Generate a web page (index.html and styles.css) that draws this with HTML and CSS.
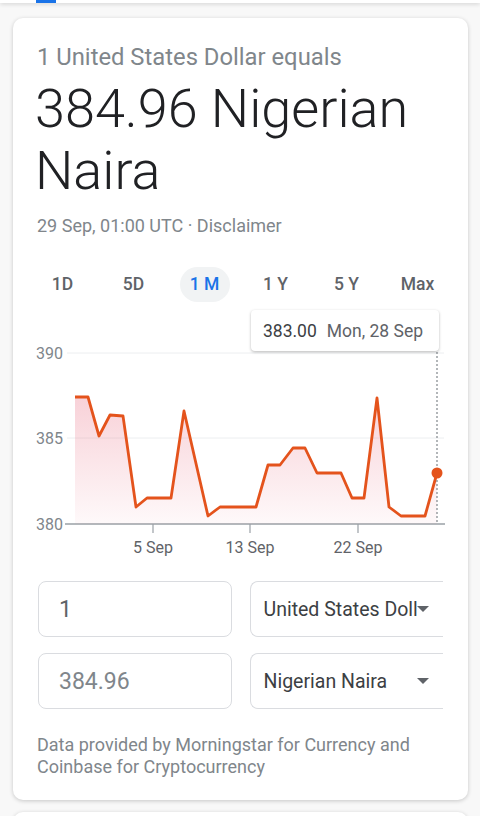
FILE: index.html
```html
<!DOCTYPE html>
<html>
<head>
<meta charset="UTF-8">
<title>USD to NGN</title>
<link rel="stylesheet" href="styles.css">
</head>
<body>

	<div class="topbar">
		<div class="topbar-mark"></div>
	</div>

	<div class="card">
		<div class="equals">1 United States Dollar equals</div>
		<div class="result">384.96 Nigerian Naira</div>
		<div class="stamp">29 Sep, 01:00 UTC · Disclaimer</div>

		<div class="tabs">
			<div class="tab">1D</div>
			<div class="tab">5D</div>
			<div class="tab"><span class="pill">1 M</span></div>
			<div class="tab">1 Y</div>
			<div class="tab">5 Y</div>
			<div class="tab">Max</div>
		</div>

		<div class="chart">
			<svg width="431" height="258" viewBox="0 0 431 258">
				<defs>
					<linearGradient id="fade" x1="0" y1="0" x2="0" y2="1">
						<stop offset="0" stop-color="#e8677d" stop-opacity="0.3"/>
						<stop offset="1" stop-color="#e8677d" stop-opacity="0.04"/>
					</linearGradient>
				</defs>
				<!-- grid -->
				<line x1="40" y1="51" x2="417" y2="51" stroke="#eceef0" stroke-width="1"/>
				<line x1="40" y1="136" x2="417" y2="136" stroke="#eceef0" stroke-width="1"/>
				<line x1="38" y1="222" x2="418" y2="222" stroke="#9aa0a6" stroke-width="1.4"/>
				<line x1="126" y1="222" x2="126" y2="231" stroke="#9aa0a6" stroke-width="1.2"/>
				<line x1="223" y1="222" x2="223" y2="231" stroke="#9aa0a6" stroke-width="1.2"/>
				<line x1="331" y1="222" x2="331" y2="231" stroke="#9aa0a6" stroke-width="1.2"/>
				<g class="ylab">
					<text x="36" y="57" text-anchor="end">390</text>
					<text x="36" y="142" text-anchor="end">385</text>
					<text x="36" y="228" text-anchor="end">380</text>
				</g>
				<g class="xlab">
					<text x="126" y="251" text-anchor="middle">5 Sep</text>
					<text x="223" y="251" text-anchor="middle">13 Sep</text>
					<text x="331" y="251" text-anchor="middle">22 Sep</text>
				</g>
				<!-- area + line -->
				<polygon fill="url(#fade)" points="48,222 48,95 61,95 72,134 83,113 96,114 109,205 120,196 144,196 157,109 181,214 193,205 229,205 241,163 253,163 266,146 278,146 290,171 314,171 325,196 337,196 350,96 362,205 374,214 398,214 410,171 410,222"/>
				<polyline fill="none" stroke="#e4531c" stroke-width="2.8" stroke-linejoin="round" points="48,95 61,95 72,134 83,113 96,114 109,205 120,196 144,196 157,109 181,214 193,205 229,205 241,163 253,163 266,146 278,146 290,171 314,171 325,196 337,196 350,96 362,205 374,214 398,214 410,171"/>
				<line x1="410" y1="50" x2="410" y2="222" stroke="#80868b" stroke-width="1.2" stroke-dasharray="2 2"/>
				<circle cx="410" cy="171" r="5.5" fill="#e4531c"/>
			</svg>
			<div class="tip"><b>383.00</b>Mon, 28 Sep</div>
		</div>

		<div class="convert">
			<div class="field">1</div>
			<div class="field sel">
				<span class="sel-text">United States Dollar</span>
				<span class="caret"></span>
			</div>
			<div class="field light">384.96</div>
			<div class="field sel">
				<span class="sel-text">Nigerian Naira</span>
				<span class="caret"></span>
			</div>
		</div>

		<div class="source">Data provided by Morningstar for Currency and Coinbase for Cryptocurrency</div>
	</div>

	<div class="card next"></div>

</body>
</html>
```

FILE: styles.css
```css
body{
	margin:0;
	background:#f8f8f8;
	font-family:Roboto,"Noto Sans",sans-serif;
	overflow:hidden;
}

.topbar{
	height:3px;
	background:#fff;
	box-shadow:0 1px 4px rgba(0,0,0,.18);
}
.topbar-mark{
	width:20px;
	height:3px;
	margin-left:36px;
	background:#1a73e8;
}

.card{
	width:455px;
	margin:15px 0 0 13px;
	background:#fff;
	border-radius:10px;
	box-shadow:0 1px 4px rgba(0,0,0,.2);
	padding:25px 0 22px;
	box-sizing:border-box;
}
.card.next{
	margin-top:12px;
	height:40px;
	padding:0;
}

.equals{
	padding-left:24px;
	font-size:23.8px;
	line-height:28px;
	color:#80868b;
}
.result{
	margin-top:7px;
	padding-left:22px;
	font-size:54px;
	font-weight:300;
	line-height:62px;
	color:#202124;
}
.stamp{
	margin-top:12px;
	padding-left:24px;
	font-size:18px;
	line-height:24px;
	color:#80868b;
}

.tabs{
	display:flex;
	margin:28px 0 0 14px;
	height:36px;
}
.tab{
	width:71px;
	display:flex;
	align-items:center;
	justify-content:center;
	font-size:17.5px;
	font-weight:500;
	color:#5f6368;
}
.pill{
	width:50px;
	height:35px;
	border-radius:18px;
	background:#f1f3f4;
	color:#1a73e8;
	display:flex;
	align-items:center;
	justify-content:center;
}

.chart{
	position:relative;
	margin-left:14px;
	height:258px;
}
.chart svg{
	display:block;
}
.ylab text,.xlab text{
	font-family:Roboto,sans-serif;
	font-size:16px;
}
.ylab text{ fill:#80868b; }
.xlab text{ fill:#5f6368; }

.tip{
	position:absolute;
	left:224px;
	top:8px;
	width:188px;
	height:41px;
	box-sizing:border-box;
	padding-left:12px;
	background:#fff;
	border-radius:4px;
	box-shadow:0 1px 3px rgba(0,0,0,.28);
	display:flex;
	align-items:center;
	font-size:17.5px;
	color:#5f6368;
}
.tip b{
	font-weight:400;
	color:#3c4043;
	margin-right:10px;
}

.convert{
	display:grid;
	grid-template-columns:1fr 1fr;
	gap:16px 18px;
	margin:21px 25px 0;
}
.field{
	height:56px;
	box-sizing:border-box;
	border:1px solid #dadce0;
	border-radius:8px;
	padding-left:20px;
	display:flex;
	align-items:center;
	font-size:23px;
	color:#5f6368;
}
.field.light{
	color:#80868b;
}
.field.sel{
	padding-left:13px;
	font-size:19.5px;
	color:#3c4043;
	border-right:0;
	border-radius:8px 0 0 8px;
}
.sel-text{
	width:153px;
	white-space:nowrap;
	overflow:hidden;
	text-overflow:clip;
}
.caret{
	width:0;
	height:0;
	border-left:6px solid transparent;
	border-right:6px solid transparent;
	border-top:6px solid #5f6368;
}

.source{
	margin-top:25px;
	padding-left:24px;
	padding-right:24px;
	font-size:18px;
	line-height:22px;
	color:#80868b;
}
```
